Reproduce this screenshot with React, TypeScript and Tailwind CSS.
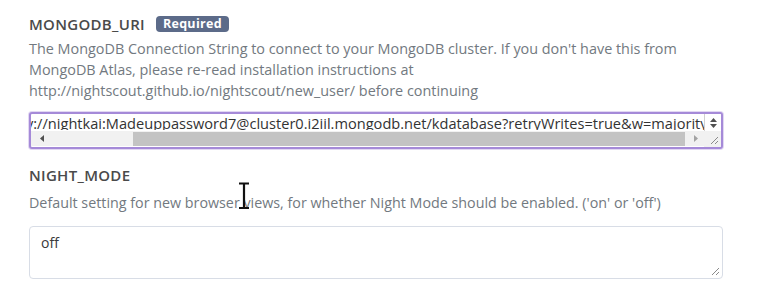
import React from 'react'

const font = { fontFamily: '"Open Sans", "Noto Sans", sans-serif' }

function ResizeGrip() {
  return (
    <svg width="9" height="9" viewBox="0 0 9 9" className="absolute bottom-[2px] right-[2px]">
      <path d="M8 1 L1 8 M8 5 L5 8" stroke="#8a8a8a" strokeWidth="1" />
    </svg>
  )
}

function Badge({ children }: { children: React.ReactNode }) {
  return (
    <span className="ml-[11px] inline-flex h-[16px] items-center rounded-[4px] bg-[#5c6b89] px-[7px] text-[12.5px] font-bold leading-none text-white">
      {children}
    </span>
  )
}

function UriBox() {
  return (
    <div className="relative mt-[11px] h-[37px] w-[694px] overflow-hidden rounded-[3px] border-2 border-[#a58ad8] bg-white shadow-[0_0_0_1px_#e2d8f3]">
      <div className="flex h-[33px]">
        <div className="flex-1 overflow-hidden">
          <div className="h-[16px] overflow-hidden whitespace-nowrap pl-[1px] text-[14.6px] leading-[18px] text-[#333]">
            <span className="ml-[-6px]">v://nightkai:Madeuppassword7@cluster0.i2iil.mongodb.net/kdatabase?retryWrites=true&amp;w=majority</span>
          </div>
          <div className="mt-[1px] flex h-[15px] items-center bg-[#f1f1f1]">
            <svg width="4" height="7" viewBox="0 0 4 7" className="ml-[9px]">
              <path d="M4 0 L0 3.5 L4 7 Z" fill="#505050" />
            </svg>
            <div className="ml-[89px] h-[14px] w-[552px] bg-[#c3c3c3]" />
            <svg width="4" height="7" viewBox="0 0 4 7" className="ml-[9px]">
              <path d="M0 0 L4 3.5 L0 7 Z" fill="#a3a3a3" />
            </svg>
          </div>
        </div>
        <div className="flex w-[17px] flex-col">
          <div className="flex h-[17px] items-center justify-center border-l border-[#d0d0d0] bg-white">
            <svg width="7" height="10" viewBox="0 0 7 10">
              <path d="M3.5 0 L7 4 L0 4 Z M0 6 L7 6 L3.5 10 Z" fill="#505050" />
            </svg>
          </div>
          <div className="flex-1 bg-[#f1f1f1]" />
        </div>
      </div>
      <ResizeGrip />
    </div>
  )
}

export default function App() {
  return (
    <div className="relative h-[296px] w-[764px] overflow-hidden bg-white" style={font}>
      <div className="flex flex-col pl-[29px] pt-[14px]">
        <div className="flex h-[20px] items-center text-[15px] font-semibold tracking-[0.3px] text-[#4a4a4a]">
          MONGODB_URI
          <Badge>Required</Badge>
        </div>
        <p className="mt-[4px] w-[720px] text-[14.4px] leading-[21px] text-[#727980]">
          The MongoDB Connection String to connect to your MongoDB cluster. If you don't have this from
          <br />
          MongoDB Atlas, please re-read installation instructions at
          <br />
          http://nightscout.github.io/nightscout/new_user/ before continuing
        </p>
        <UriBox />

        <div className="mt-[16px] flex h-[20px] items-center text-[15px] font-semibold tracking-[0.3px] text-[#4a4a4a]">
          NIGHT_MODE
        </div>
        <p className="mt-[7px] text-[14.3px] leading-[21px] text-[#727980]">
          Default setting for new browser views, for whether Night Mode should be enabled. ('on' or 'off')
        </p>
        <div className="relative mt-[13px] h-[53px] w-[694px] rounded-[4px] border border-[#d8dde6] bg-white px-[11px] pt-[5px] text-[14px] leading-[21px] text-[#3a3a3a]">
          off
          <ResizeGrip />
        </div>
      </div>

      {/* text cursor over the page */}
      <svg width="14" height="28" viewBox="0 0 14 28" className="absolute left-[237px] top-[182px]">
        <path d="M2 1.5 H12 M7 1.5 V26 M2 26 H12" stroke="#111" strokeWidth="2.2" fill="none" />
      </svg>
    </div>
  )
}
